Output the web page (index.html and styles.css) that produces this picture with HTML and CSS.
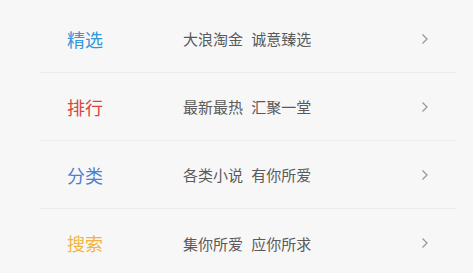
FILE: index.html
```html
<!DOCTYPE html>
<html lang="zh">
<head>
<meta charset="utf-8">
<link rel="stylesheet" href="styles.css">
</head>
<body>
<ul class="menu">
  <li class="row">
    <span class="title blue">精选</span>
    <span class="desc">大浪淘金 诚意臻选</span>
    <svg class="chev" width="8" height="12" viewBox="0 0 8 12"><path d="M1.5 1.5 L6 6 L1.5 10.5" fill="none" stroke="#9a9a9a" stroke-width="1.3"/></svg>
  </li>
  <li class="row">
    <span class="title red">排行</span>
    <span class="desc">最新最热 汇聚一堂</span>
    <svg class="chev" width="8" height="12" viewBox="0 0 8 12"><path d="M1.5 1.5 L6 6 L1.5 10.5" fill="none" stroke="#9a9a9a" stroke-width="1.3"/></svg>
  </li>
  <li class="row">
    <span class="title indigo">分类</span>
    <span class="desc">各类小说 有你所爱</span>
    <svg class="chev" width="8" height="12" viewBox="0 0 8 12"><path d="M1.5 1.5 L6 6 L1.5 10.5" fill="none" stroke="#9a9a9a" stroke-width="1.3"/></svg>
  </li>
  <li class="row last">
    <span class="title orange">搜索</span>
    <span class="desc">集你所爱 应你所求</span>
    <svg class="chev" width="8" height="12" viewBox="0 0 8 12"><path d="M1.5 1.5 L6 6 L1.5 10.5" fill="none" stroke="#9a9a9a" stroke-width="1.3"/></svg>
  </li>
</ul>
</body>
</html>
```
FILE: styles.css
```css
html, body {
  margin: 0;
  padding: 0;
  background: #f7f7f7;
  font-family: "Noto Sans CJK SC", "Noto Sans", sans-serif;
}
.menu {
  list-style: none;
  margin: 0 17px 0 40px;
  padding: 5px 0 0 0;
}
.row {
  display: flex;
  align-items: center;
  height: 68px;
  box-sizing: border-box;
  border-bottom: 1px solid #ebebeb;
}
.row.last {
  border-bottom: none;
}
.title {
  width: 116px;
  padding-left: 27px;
  box-sizing: content-box;
  font-size: 18px;
  line-height: 1;
}
.blue { color: #3498d8; }
.red { color: #d9443c; }
.indigo { color: #4b7fcf; }
.orange { color: #f2b342; }
.desc {
  flex: 1;
  font-size: 15px;
  color: #5a5a5a;
  word-spacing: 5px;
  line-height: 1;
}
.chev {
  margin-right: 27px;
  display: block;
}
```
